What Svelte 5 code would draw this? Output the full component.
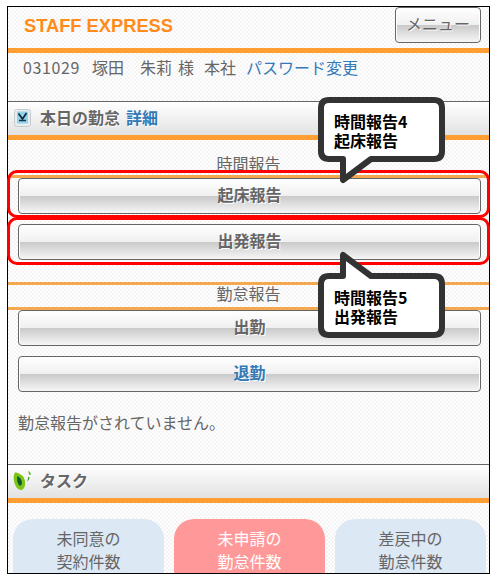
<script>
  const tasks = [
    { a: '未同意の', b: '契約件数', alert: false },
    { a: '未申請の', b: '勤怠件数', alert: true },
    { a: '差戻中の', b: '勤怠件数', alert: false }
  ];
</script>

<div class="page">
  <div class="frame">
    <header class="top">
      <span class="logo">STAFF EXPRESS</span>
      <button class="btn menu">メニュー</button>
    </header>

    <div class="user">
      <span class="uid">031029</span>
      <span class="uname">塚田　朱莉</span>
      <span class="usama">様</span>
      <span class="uorg">本社</span>
      <a class="ulink" href="#p">パスワード変更</a>
    </div>

    <h2 class="sec">
      <svg class="ico1" width="17" height="18" viewBox="0 0 17 18">
        <rect x="0.5" y="0.5" width="16" height="17" rx="2" fill="#e8eef0" stroke="#c4ccd0"/>
        <rect x="3" y="2.5" width="11" height="12" fill="#8fd4ea"/>
        <path d="M4.5 4.5 L8.5 10 L12.5 4" fill="none" stroke="#123" stroke-width="1.6"/>
        <path d="M5 11.5 H12" stroke="#234" stroke-width="1.5"/>
      </svg>
      <span>本日の勤怠</span><a href="#d">詳細</a>
    </h2>

    <div class="label first">時間報告</div>
    <div class="group">
      <button class="btn">起床報告</button>
      <button class="btn">出発報告</button>
    </div>

    <div class="label second">勤怠報告</div>
    <div class="group">
      <button class="btn">出勤</button>
      <button class="btn blue">退勤</button>
    </div>

    <p class="note">勤怠報告がされていません。</p>

    <h2 class="sec task">
      <svg class="ico2" width="20" height="21" viewBox="0 0 20 21">
        <path d="M2 2.5 C0 5 0 13 4 18 C7 21 10 20.5 11.5 17 C13 13 12 8 9 5.5 C7 3.5 4 2 2 2.5 Z" fill="#7cc417"/>
        <path d="M4.5 6 C3.5 9 4.5 13.5 6.5 15.5 C8.5 16.5 9.5 13 8.5 10.5 C7.8 8.5 6 6.5 4.5 6 Z" fill="#0d5a2a"/>
        <path d="M15 1 C17.5 2 18 3.5 17.5 5 L16 4.5 C16 3.2 15.5 2 15 1 Z" fill="#58b81a"/>
        <path d="M16.5 7 C16.5 9 15.5 10.5 14 11.5 C14.8 10 15 8.5 15 7 Z" fill="#3ca82a"/>
      </svg>
      <span>タスク</span>
    </h2>

    <div class="cards">
      {#each tasks as t}
        <div class="card" class:alert={t.alert}>{t.a}<br />{t.b}</div>
      {/each}
    </div>

    <div class="mark m1"></div>
    <div class="mark m2"></div>

    <div class="tip t1">
      <svg width="127" height="92" viewBox="0 0 127 92">
        <path d="M11 3 H116 Q124 3 124 11 V54 Q124 62 116 62 H53 L25 83 V62 H11 Q3 62 3 54 V11 Q3 3 11 3 Z" fill="#fff" stroke="#333" stroke-width="6" stroke-linejoin="round"/>
      </svg>
      <div class="tip-text">時間報告4<br />起床報告</div>
    </div>

    <div class="tip t2">
      <svg width="127" height="92" viewBox="0 0 127 92">
        <path d="M11 87 H116 Q124 87 124 79 V36 Q124 28 116 28 H53 L25 7 V28 H11 Q3 28 3 36 V79 Q3 87 11 87 Z" fill="#fff" stroke="#333" stroke-width="6" stroke-linejoin="round"/>
      </svg>
      <div class="tip-text">時間報告5<br />出発報告</div>
    </div>
  </div>
</div>

<style>
  :global(body) {
    margin: 0;
    background: #fff;
  }
  .page {
    padding: 6px 7px;
    font-family: "Noto Sans CJK JP", "Liberation Sans", sans-serif;
    font-size: 16px;
    color: #666;
  }
  .frame {
    position: relative;
    box-sizing: border-box;
    width: 483px;
    height: 568px;
    border: 1px solid #000;
    background-color: #fff;
    background-image: repeating-conic-gradient(#f4f4f4 0 25%, #fff 0 50%);
    background-size: 4px 4px;
  }
  a {
    color: #337ab7;
    text-decoration: none;
  }
  .top {
    box-sizing: border-box;
    height: 46px;
    border-bottom: 5px solid #ff9f33;
    display: flex;
    justify-content: space-between;
    align-items: flex-start;
    padding-right: 8px;
  }
  .logo {
    margin: 8px 0 0 16px;
    font-family: "Liberation Sans", sans-serif;
    font-weight: 700;
    font-size: 18.3px;
    line-height: 22px;
    color: #ff8c1a;
  }
  .btn {
    display: block;
    box-sizing: border-box;
    width: 463px;
    height: 36px;
    padding: 0 0 4px;
    border: 1px solid #666;
    border-radius: 4px;
    font: inherit;
    font-weight: 700;
    line-height: 30px;
    color: #666;
    text-shadow: 1px 1px 0 #fff;
    background: linear-gradient(#fff 0, #f0f0f0 49%, #c9c9c9 50%, #f6f6f6 100%);
    box-shadow: inset 1px 0 0 #fff, inset -1px 0 0 #fff;
  }
  .menu {
    width: 86px;
    font-weight: 400;
  }
  .user {
    display: flex;
    height: 48px;
    box-sizing: border-box;
    padding: 2px 0 0 15px;
    line-height: 24px;
  }
  .uid {
    letter-spacing: 0.6px;
  }
  .uname {
    margin-left: 12px;
  }
  .usama {
    margin-left: 6px;
  }
  .uorg,
  .ulink {
    margin-left: 10px;
  }
  .sec {
    box-sizing: border-box;
    height: 39px;
    margin: 0;
    padding-bottom: 4px;
    border-top: 1px solid #666;
    border-bottom: 5px solid #ff9f33;
    background: linear-gradient(#fff, #e2e2e2);
    display: flex;
    align-items: center;
    font-size: 16px;
    font-weight: 700;
    line-height: 24px;
    color: #666;
    text-shadow: 1px 1px 0 #fff;
  }
  .sec a {
    margin-left: 6px;
  }
  .ico1 {
    margin: 2px 9px 0 6px;
  }
  .ico2 {
    margin: 2px 7px 0 5px;
  }
  .label {
    text-align: center;
    line-height: 16px;
    border-bottom: 3px solid #f4a950;
  }
  .first {
    padding: 15px 0 4px;
  }
  .second {
    margin-top: 22px;
    padding-bottom: 6px;
    border-top: 3px solid #f4a950;
  }
  .group {
    display: flex;
    flex-direction: column;
    gap: 10px;
    padding-left: 10px;
  }
  .blue {
    color: #337ab7;
  }
  .note {
    margin: 0;
    padding: 19px 0 31px 10px;
    line-height: 22px;
  }
  .cards {
    display: flex;
    gap: 10px;
    height: 54px;
    overflow: hidden;
    padding: 16px 0 0 5px;
  }
  .card {
    width: 151px;
    height: 90px;
    padding-top: 8px;
    box-sizing: border-box;
    border-radius: 20px;
    background: #dde8f5;
    text-align: center;
    line-height: 23px;
  }
  .alert {
    background: #ff9999;
    color: #fff;
  }
  .mark {
    position: absolute;
    left: -1px;
    right: -1px;
    box-sizing: border-box;
    border: 3.5px solid #f00;
    border-radius: 10px;
  }
  .m1 {
    top: 163px;
    height: 48px;
  }
  .m2 {
    top: 210px;
    height: 48px;
  }
  .tip {
    position: absolute;
    left: 310px;
    width: 127px;
    height: 92px;
  }
  .tip svg {
    display: block;
  }
  .t1 {
    top: 90px;
  }
  .t2 {
    top: 241px;
  }
  .tip-text {
    position: absolute;
    left: 16px;
    font-weight: 700;
    font-size: 16px;
    line-height: 19px;
    color: #000;
  }
  .t1 .tip-text {
    top: 15px;
  }
  .t2 .tip-text {
    top: 40px;
  }
</style>
